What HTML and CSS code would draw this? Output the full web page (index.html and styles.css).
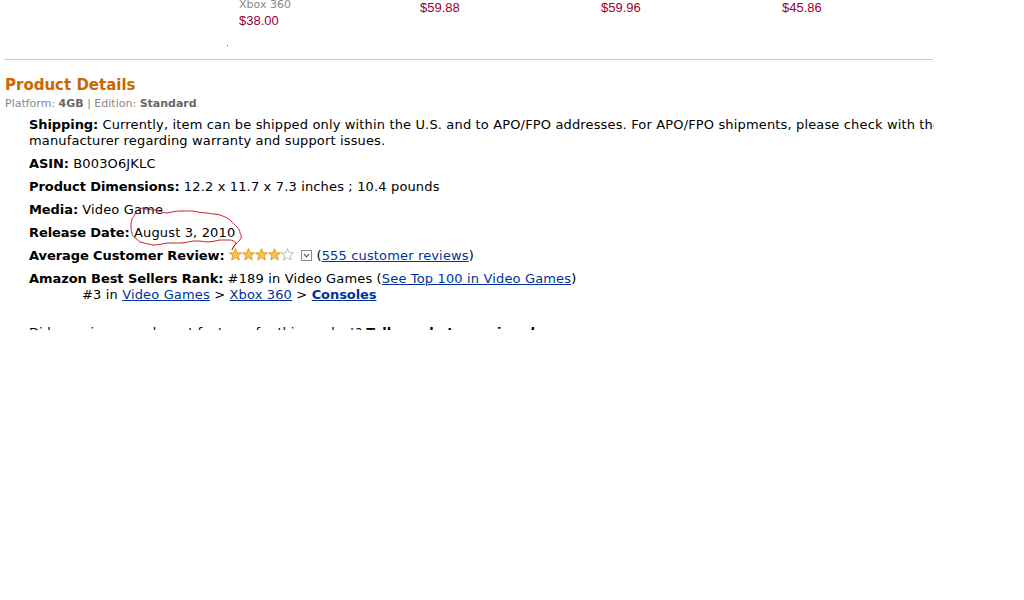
FILE: index.html
```html
<!DOCTYPE html>
<html lang="en">
<head>
  <meta charset="UTF-8" />
  <title>Product Details</title>
  <link rel="stylesheet" href="styles.css">
</head>
<body>

  <div class="page">
    <!-- CAROUSEL TAIL -->
    <div class="carousel">
      <div class="item">
        <div class="item-title">Xbox 360</div>
        <div class="price">$38.00</div>
      </div>
      <div class="item"><div class="price">$59.88</div></div>
      <div class="item"><div class="price">$59.96</div></div>
      <div class="item"><div class="price">$45.86</div></div>
    </div>
    <div class="dot-row"><span class="dot"></span></div>
    <hr class="divider">

    <!-- PRODUCT DETAILS -->
    <h2>Product Details</h2>
    <div class="variation">Platform: <b>4GB</b> | Edition: <b>Standard</b></div>

    <ul class="details">
      <li><b>Shipping:</b> Currently, item can be shipped only within the U.S. and to APO/FPO addresses. For APO/FPO shipments, please check with the manufacturer regarding warranty and support issues.</li>
      <li><b>ASIN:</b> B003O6JKLC</li>
      <li><b>Product Dimensions:</b> 12.2 x 11.7 x 7.3 inches ; 10.4 pounds</li>
      <li><b>Media:</b> Video Game</li>
      <li><b>Release Date:</b> August 3, 2010</li>
      <li>
        <b>Average Customer Review:</b>
        <svg class="stars" width="66" height="13" viewBox="0 0 66 13">
          <defs>
            <path id="star" d="M6.5 0.6 L8.2 4.6 L12.5 4.9 L9.2 7.7 L10.3 12 L6.5 9.7 L2.7 12 L3.8 7.7 L0.5 4.9 L4.8 4.6 Z"/>
          </defs>
          <use href="#star" x="0" fill="#f7c24a" stroke="#d9912b" stroke-width="0.8"/>
          <use href="#star" x="13" fill="#f7c24a" stroke="#d9912b" stroke-width="0.8"/>
          <use href="#star" x="26" fill="#f7c24a" stroke="#d9912b" stroke-width="0.8"/>
          <use href="#star" x="39" fill="#f7c24a" stroke="#d9912b" stroke-width="0.8"/>
          <use href="#star" x="52" fill="#fff" stroke="#a9a9a9" stroke-width="0.8"/>
        </svg>
        <svg class="popover" width="11" height="11" viewBox="0 0 11 11">
          <rect x="0.5" y="0.5" width="10" height="10" fill="#fff" stroke="#8a8a8a"/>
          <path d="M3 4 L5.5 6.8 L8 4" fill="none" stroke="#666" stroke-width="1.2"/>
        </svg>
        (<a href="#">555 customer reviews</a>)
      </li>
      <li>
        <b>Amazon Best Sellers Rank:</b> #189 in Video Games (<a href="#">See Top 100 in Video Games</a>)
        <ul class="ranks">
          <li>#3 in <a href="#">Video Games</a> &gt; <a href="#">Xbox 360</a> &gt; <b><a href="#">Consoles</a></b></li>
        </ul>
      </li>
    </ul>

    <div class="feedback">Did we miss any relevant features for this product? <b>Tell us what we missed.</b></div>

    <!-- hand drawn mark -->
    <svg class="scribble" width="1024" height="330" viewBox="0 0 1024 330">
      <path d="M134 216 C136 212 138 209 141 208 C146 209 150 210 155 210 C160 211 163 213 167 213 C172 212 176 211 181 211 C186 211 189 211 193 211 C198 212 202 213 207 213 C212 214 216 214 220 215 C225 217 228 218 230 220 C233 223 235 225 237 227 C239 229 240 231 240 233 C241 235 242 237 241 238 C240 240 238 242 236 244 C234 246 233 248 232 250 C233 247 235 245 236 243 C234 241 232 240 230 240 C226 240 223 240 220 240 C215 241 211 242 207 242 C202 241 198 241 193 241 C188 242 184 243 180 243 C175 243 171 243 167 243 C162 244 158 245 153 245 C149 244 144 243 140 242 C138 240 136 239 135 238 C133 236 132 235 132 233 C131 230 131 229 131 227 C131 224 131 222 132 220 C132 218 133 217 134 216" fill="none" stroke="#c8232c" stroke-width="1"/>
    </svg>
  </div>

</body>
</html>
```

FILE: styles.css
```css
body {
  margin: 0;
  background-color: #ffffff;
  font-family: 'DejaVu Sans', Verdana, sans-serif;
  color: #000000;
}

.page {
  position: relative;
  width: 934px;
  height: 330px;
  overflow: hidden;
}

/* carousel */
.carousel {
  display: flex;
  padding-left: 239px;
}

.item {
  flex: 0 0 181px;
}

.item-title {
  font-size: 11px;
  line-height: 14px;
  margin-top: -2px;
  color: #888888;
}

.price {
  font-family: 'Liberation Sans', Arial, sans-serif;
  font-size: 13px;
  line-height: 15px;
  color: #990033;
}

.item-title + .price {
  line-height: 17px;
}

.dot-row {
  height: 28px;
  padding-left: 227px;
  padding-top: 16px;
  box-sizing: border-box;
}

.dot {
  display: block;
  width: 1px;
  height: 1px;
  background-color: #555555;
}

.divider {
  margin: 2px 1px 0 4px;
  border: none;
  border-top: 1px solid #cccccc;
  height: 0;
}

h2 {
  margin: 16px 0 0 5px;
  font-size: 15px;
  line-height: 18px;
  color: #cc6600;
}

.variation {
  margin: 3px 0 0 5px;
  font-size: 11px;
  line-height: 14px;
  color: #888888;
}

.variation b {
  color: #666666;
}

/* details list */
.details {
  list-style: none;
  width: 925px;
  margin: 6px 0 0 29px;
  padding: 0;
  font-size: 13px;
  line-height: 16px;
  letter-spacing: 0.15px;
}

.details b {
  letter-spacing: -0.08px;
}

.details > li {
  margin-bottom: 7px;
}

.details a {
  color: #003399;
}

.stars {
  vertical-align: -1px;
}

.popover {
  margin-left: 2px;
  vertical-align: -1px;
}

.ranks {
  list-style: none;
  margin: 0 0 0 53px;
  padding: 0;
}

.feedback {
  margin: 22px 0 0 29px;
  font-size: 13px;
  line-height: 16px;
}

.scribble {
  position: absolute;
  left: 0;
  top: 0;
  pointer-events: none;
}
```
